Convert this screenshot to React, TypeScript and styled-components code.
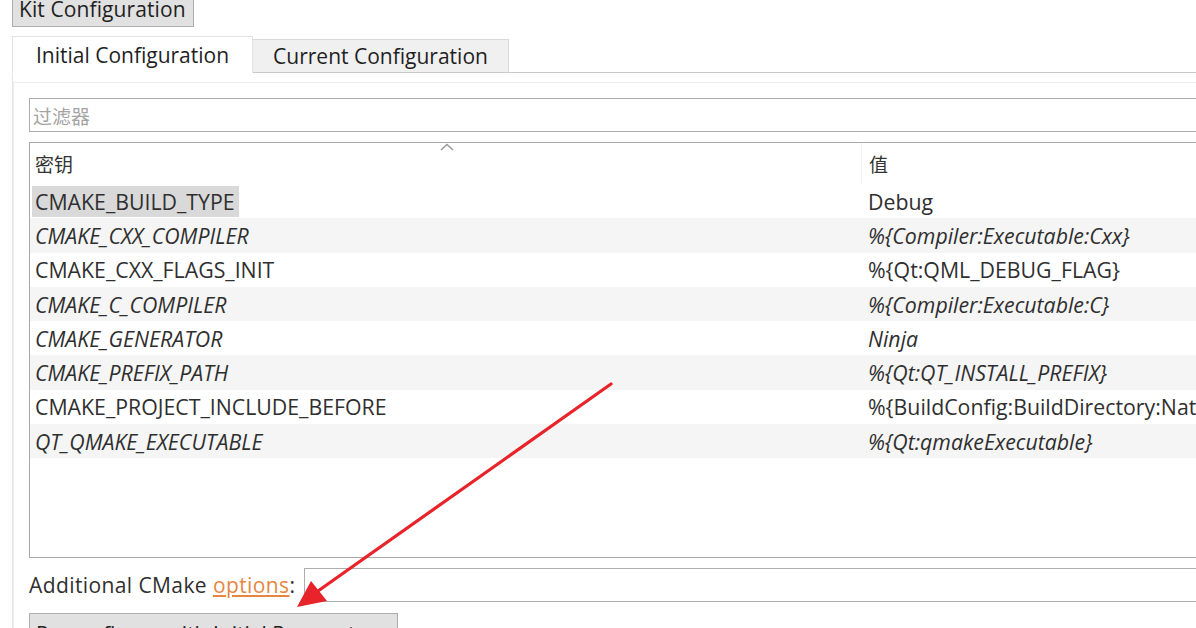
import styled, { createGlobalStyle } from 'styled-components'

const GlobalStyle = createGlobalStyle`
	html, body {
		margin: 0;
		padding: 0;
		background: #ffffff;
		overflow: hidden;
	}
	body {
		font-family: 'Open Sans', 'Noto Sans CJK SC', sans-serif;
		color: #2f2f2f;
	}
`

const rows = [
	{ key: 'CMAKE_BUILD_TYPE', value: 'Debug', italic: false, selected: true },
	{ key: 'CMAKE_CXX_COMPILER', value: '%{Compiler:Executable:Cxx}', italic: true },
	{ key: 'CMAKE_CXX_FLAGS_INIT', value: '%{Qt:QML_DEBUG_FLAG}', italic: false },
	{ key: 'CMAKE_C_COMPILER', value: '%{Compiler:Executable:C}', italic: true },
	{ key: 'CMAKE_GENERATOR', value: 'Ninja', italic: true },
	{ key: 'CMAKE_PREFIX_PATH', value: '%{Qt:QT_INSTALL_PREFIX}', italic: true },
	{ key: 'CMAKE_PROJECT_INCLUDE_BEFORE', value: '%{BuildConfig:BuildDirectory:NativeFilePath}/.qtc/package-manager/auto-setup.cmake', italic: false },
	{ key: 'QT_QMAKE_EXECUTABLE', value: '%{Qt:qmakeExecutable}', italic: true },
]

export default function App() {
	return (
		<Page>
			<GlobalStyle />
			<KitButton>Kit Configuration</KitButton>
			<TabBar>
				<Tab active>Initial Configuration</Tab>
				<Tab>Current Configuration</Tab>
			</TabBar>
			<Pane>
				<Inner>
					<Filter placeholder="过滤器" />
					<Table>
						<Header>
							<HeadCell>
								密钥
								<SortMark>
									<svg width="14" height="8" viewBox="0 0 14 8">
										<path d="M1 7 L7 1.5 L13 7" fill="none" stroke="#9a9a9a" strokeWidth="1.6" />
									</svg>
								</SortMark>
							</HeadCell>
							<HeadCell value>值</HeadCell>
						</Header>
						{rows.map((r, i) => (
							<Row key={r.key} shaded={i % 2 === 1}>
								<KeyCell italic={r.italic}>
									{r.selected ? <Selected>{r.key}</Selected> : r.key}
								</KeyCell>
								<ValueCell italic={r.italic}>{r.value}</ValueCell>
							</Row>
						))}
					</Table>
					<OptionsRow>
						<Label>
							Additional CMake <Link>options</Link>:
						</Label>
						<OptionsInput />
					</OptionsRow>
					<Reconfigure>Re-configure with Initial Parameters</Reconfigure>
				</Inner>
			</Pane>
			<Arrow width="1196" height="628" viewBox="0 0 1196 628">
				<line x1="611" y1="384" x2="318" y2="591" stroke="#e8242a" strokeWidth="3.2" strokeLinecap="round" />
				<polygon points="297,607 311,581 327,601" fill="#e8242a" />
			</Arrow>
		</Page>
	)
}

const Page = styled.div`
	position: relative;
	width: 1196px;
	height: 628px;
	overflow: hidden;
	padding-left: 12px;
	box-sizing: border-box;
`

const KitButton = styled.div`
	display: inline-flex;
	align-items: center;
	margin-top: -13px;
	height: 36px;
	padding: 0 7px 0 6px;
	background: #e1e1e1;
	border: 1px solid #adadad;
	font-size: 21px;
	letter-spacing: 0.1px;
	color: #1f1f1f;
	box-sizing: border-box;
	white-space: nowrap;
`

const TabBar = styled.div`
	display: flex;
	align-items: flex-end;
	margin-top: 9px;
	height: 37px;
	position: relative;
	z-index: 1;
`

const Tab = styled.div<{ active?: boolean }>`
	display: flex;
	align-items: center;
	justify-content: center;
	box-sizing: border-box;
	height: ${(p) => (p.active ? '37px' : '34px')};
	width: ${(p) => (p.active ? '241px' : '256px')};
	background: ${(p) => (p.active ? '#ffffff' : '#f0f0f0')};
	border: 1px solid ${(p) => (p.active ? '#e3e3e3' : '#d9d9d9')};
	border-bottom: ${(p) => (p.active ? '1px solid #ffffff' : '1px solid #c9c9c9')};
	border-left: ${(p) => (p.active ? '1px solid #e3e3e3' : 'none')};
	font-size: 21px;
	color: #1f1f1f;
	white-space: nowrap;
`

const Pane = styled.div`
	margin-top: -1px;
	width: 1240px;
	border-top: 1px solid #c9c9c9;
	border-left: 1px solid #e6e6e6;
	padding-top: 9px;
`

const Inner = styled.div`
	border-top: 1px solid #ededed;
	border-left: 1px solid #ededed;
	padding: 15px 0 0 15px;
	display: flex;
	flex-direction: column;
`

const Filter = styled.input`
	box-sizing: border-box;
	width: 1220px;
	height: 34px;
	border: 1px solid #adadad;
	padding: 0 3px;
	font-family: 'Noto Sans CJK SC', sans-serif;
	font-size: 19px;
	outline: none;
	&::placeholder {
		color: #a3a3a3;
	}
`

const Table = styled.div`
	margin-top: 10px;
	width: 1220px;
	height: 416px;
	box-sizing: border-box;
	border: 1px solid #a9a9a9;
	overflow: hidden;
`

const Header = styled.div`
	display: flex;
	height: 41px;
	align-items: center;
`

const HeadCell = styled.div<{ value?: boolean }>`
	position: relative;
	box-sizing: border-box;
	height: 100%;
	display: flex;
	align-items: center;
	width: ${(p) => (p.value ? 'auto' : '832px')};
	flex: ${(p) => (p.value ? '1' : 'none')};
	padding-left: ${(p) => (p.value ? '7px' : '5px')};
	border-right: ${(p) => (p.value ? 'none' : '1px solid #f0f0f0')};
	font-family: 'Noto Sans CJK SC', sans-serif;
	font-size: 19px;
	color: #333;
`

const SortMark = styled.span`
	position: absolute;
	left: 410px;
	top: 0px;
	line-height: 0;
`

const Row = styled.div<{ shaded?: boolean }>`
	display: flex;
	align-items: center;
	height: 34.3px;
	background: ${(p) => (p.shaded ? '#f5f5f5' : '#ffffff')};
`

const KeyCell = styled.div<{ italic?: boolean }>`
	width: 832px;
	flex: none;
	box-sizing: border-box;
	padding-left: 5px;
	font-size: 21.3px;
	font-style: ${(p) => (p.italic ? 'italic' : 'normal')};
	white-space: nowrap;
`

const Selected = styled.span`
	display: inline-block;
	background: #d9d9d9;
	margin-left: -3px;
	padding: 1px 4px 1px 3px;
`

const ValueCell = styled.div<{ italic?: boolean }>`
	flex: 1;
	padding-left: 6px;
	font-size: 21.3px;
	font-style: ${(p) => (p.italic ? 'italic' : 'normal')};
	white-space: nowrap;
	overflow: hidden;
`

const OptionsRow = styled.div`
	display: flex;
	align-items: center;
	gap: 9px;
	margin-top: 9px;
	height: 35px;
`

const Label = styled.span`
	font-size: 21px;
	letter-spacing: 0.4px;
	color: #2f2f2f;
	white-space: nowrap;
`

const Link = styled.span`
	color: #e8863f;
	text-decoration: underline;
`

const OptionsInput = styled.div`
	flex: 1;
	height: 34px;
	box-sizing: border-box;
	border: 1px solid #adadad;
`

const Reconfigure = styled.div`
	margin-top: 11px;
	width: 369px;
	height: 34px;
	box-sizing: border-box;
	background: #e1e1e1;
	border: 1px solid #adadad;
	padding: 6px 0 0 6px;
	font-size: 21px;
	color: #1f1f1f;
	white-space: nowrap;
	overflow: hidden;
`

const Arrow = styled.svg`
	position: absolute;
	left: 0;
	top: 0;
	pointer-events: none;
`
